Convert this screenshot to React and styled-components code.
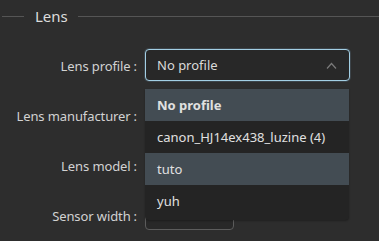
import React from "react";
import styled, { createGlobalStyle } from "styled-components";

const Global = createGlobalStyle`
  html, body { margin: 0; padding: 0; background: #2d2d2d; }
  body { font-family: "Noto Sans", "Open Sans", sans-serif; }
`;

const Page = styled.div`
  position: relative;
  width: 379px;
  height: 241px;
  overflow: hidden;
  background: #2d2d2d;
  color: #d6d6d6;
`;

const GroupHeader = styled.div`
  display: flex;
  align-items: center;
  height: 32px;
`;

const Rule = styled.div`
  height: 1px;
  background: #555555;
  width: ${(p) => (p.$grow ? "auto" : "22px")};
  flex: ${(p) => (p.$grow ? "1" : "none")};
  margin-left: ${(p) => (p.$grow ? "0" : "2px")};
`;

const GroupTitle = styled.span`
  font-size: 15px;
  color: #dcdcdc;
  margin: 0 10px 0 11px;
  line-height: 1;
`;

const Form = styled.div`
  display: grid;
  grid-template-columns: 137px 1fr;
  grid-auto-rows: 32px;
  column-gap: 8px;
  row-gap: 18px;
  padding-top: 17px;
`;

const Label = styled.div`
  display: flex;
  align-items: center;
  justify-content: flex-end;
  font-size: 13px;
  color: #d2d2d2;
  padding-top: 1px;
  letter-spacing: -0.1px;
`;

const Colon = styled.span`
  margin-left: 3px;
`;

const Combo = styled.div`
  width: 205px;
  box-sizing: border-box;
  height: 32px;
  border: 1px solid #a3cfe4;
  border-radius: 4px;
  box-shadow: 0 0 0 1px #3c444a;
  background: #282828;
  display: flex;
  align-items: center;
  justify-content: space-between;
  padding: 0 12px 0 11px;
  font-size: 13px;
  color: #dadada;
`;

const Field = styled.div`
  width: ${(p) => p.$w}px;
  box-sizing: border-box;
  height: ${(p) => p.$h || 32}px;
  border: 1px solid #5c5c5c;
  border-radius: 4px;
  background: #282828;
`;

const Popup = styled.div`
  position: absolute;
  left: 145px;
  top: 89px;
  width: 204px;
  padding-bottom: 3px;
  background: #242424;
  border-radius: 0 0 4px 4px;
  box-shadow: 0 1px 2px rgba(0, 0, 0, 0.3);
`;

const Item = styled.div`
  height: 32px;
  display: flex;
  align-items: center;
  padding-left: 12px;
  font-size: 13px;
  font-weight: ${(p) => (p.$bold ? 700 : 400)};
  background: ${(p) => (p.$hl ? "#434c53" : "transparent")};
  color: #e0e0e0;
  white-space: nowrap;
`;

const Chevron = () => (
  <svg width="11" height="7" viewBox="0 0 11 7">
    <polyline points="1,6.5 5.5,1.5 10,6.5" fill="none" stroke="#7a7a7a" strokeWidth="1.2" />
  </svg>
);

const rows = ["Lens profile", "Lens manufacturer", "Lens model", "Sensor width"];

export default function App() {
  return (
    <Page>
      <Global />
      <GroupHeader>
        <Rule />
        <GroupTitle>Lens</GroupTitle>
        <Rule $grow />
      </GroupHeader>
      <Form>
        <Label>
          {rows[0]}
          <Colon>:</Colon>
        </Label>
        <Combo>
          <span>No profile</span>
          <Chevron />
        </Combo>
        <Label>
          {rows[1]}
          <Colon>:</Colon>
        </Label>
        <Field $w={204} />
        <Label>
          {rows[2]}
          <Colon>:</Colon>
        </Label>
        <Field $w={204} />
        <Label>
          {rows[3]}
          <Colon>:</Colon>
        </Label>
        <Field $w={89} $h={31} />
      </Form>
      <Popup>
        <Item $bold $hl>No profile</Item>
        <Item>canon_HJ14ex438_luzine (4)</Item>
        <Item $hl>tuto</Item>
        <Item>yuh</Item>
      </Popup>
    </Page>
  );
}
